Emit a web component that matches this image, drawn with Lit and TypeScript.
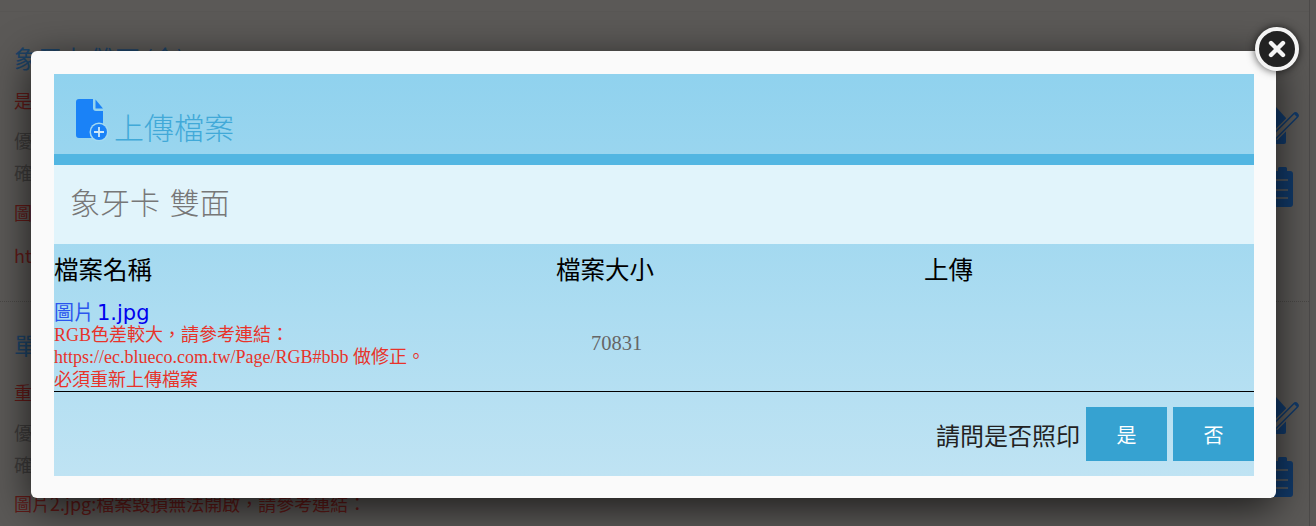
import { LitElement, html, css, svg } from "lit";
import { customElement } from "lit/decorators.js";

const editIcon = svg`<svg class="ico" width="38" height="38" viewBox="0 0 38 38">
  <path fill="#113a6a" d="M0 0H15L25 11V35a2 2 0 0 1-2 2H0Z"/>
  <path fill="none" stroke="#5b5957" stroke-width="9" d="M34.5 8.5 13 30"/>
  <path fill="none" stroke="#113a6a" stroke-width="6.5" stroke-linecap="round" d="M34.5 8.5 13 30"/>
  <path fill="none" stroke="#5b5957" stroke-width="3.4" d="M34.5 8.5 13 30"/>
</svg>`;
const clipIcon = svg`<svg class="ico" width="32" height="40" viewBox="0 0 32 40">
  <path fill="#113a6a" d="M0 4H17V1.5a1.5 1.5 0 0 1 1.5-1.5h6a1.5 1.5 0 0 1 1.5 1.5V4h3a3 3 0 0 1 3 3v30a3 3 0 0 1-3 3H0Z"/>
  <path stroke="#5b5957" stroke-width="1.5" d="M0 13H27M0 23H27M0 31H27"/>
</svg>`;

@customElement("app-root")
export class AppRoot extends LitElement {
  static styles = css`
    :host { display: block; width: 1316px; height: 526px; position: relative; overflow: hidden; background: #5b5957;
      font-family: "Noto Sans CJK TC", "Liberation Sans", sans-serif; }
    .page { width: 1310px; height: 526px; box-sizing: border-box; padding-top: 11px;
      display: flex; flex-direction: column; border-right: 1px solid #4c4a49; overflow: hidden; }
    .item { position: relative; flex: none; padding: 27px 0 0 14px; border-top: 1px dotted #4a4846; }
    .item.first { height: 290px; box-sizing: border-box; padding-top: 30px; border-top: 1px solid #585654; }
    .item h3 { margin: 0 0 15px; font-size: 24px; line-height: 32px; font-weight: 400; color: #1d4468; }
    .item.first h3 { margin-bottom: 10px; }
    .item p { margin: 0 0 8px; font-size: 18px; line-height: 32px; color: #3e3c3b; }
    .item p.tight { margin-bottom: 0; }
    .item p.red { color: #621a17; }
    .item p.last { margin-bottom: 11px; }
    .item p.close-gap { margin-bottom: 7px; }
    .tools { position: absolute; right: 10px; top: 95px; display: flex; flex-direction: column; align-items: flex-start; gap: 22px; }
    .ico { display: block; }
    .modal { position: absolute; left: 31px; top: 51px; width: 1245px; height: 447px; box-sizing: border-box;
      padding: 23px 22px 22px 23px; background: #fafafa; border-radius: 6px;
      box-shadow: 0 10px 40px rgba(0,0,0,.7); }
    .inner { height: 402px; background: linear-gradient(to bottom, #90d2ee, #bfe3f3); display: flex; flex-direction: column; }
    .head { height: 80px; box-sizing: border-box; display: flex; align-items: flex-end; padding: 0 0 4px 22px; gap: 5px; flex: none; }
    .head svg { margin-bottom: 9px; display: block; }
    .head h2 { margin: 0; font-size: 30px; line-height: 48px; font-weight: 300; color: #41a9d8; }
    .bar { height: 11px; background: #52b6e2; flex: none; }
    .sub { height: 79px; box-sizing: border-box; background: #e1f4fb; padding: 0 0 8px 16px; flex: none; display: flex; align-items: center;
      font-size: 30px; font-weight: 300; color: #777; word-spacing: 3px; }
    .thead, .row { display: grid; grid-template-columns: 502px 368px 1fr; }
    .thead { height: 52px; box-sizing: border-box; padding-bottom: 4px; align-items: center; font-size: 24.5px; color: #000; }
    .row { height: 96px; box-sizing: border-box; border-bottom: 1px solid #000; align-items: end; font-family: "Liberation Serif", "Noto Sans CJK TC", serif; }
    .file a { display: block; color: #2a55ee; font-size: 20px; line-height: 24px; margin-bottom: -1px; font-family: "DejaVu Sans", "Noto Sans CJK TC", sans-serif; text-decoration: none; }
    .file a b { font-weight: 400; font-size: 21px; color: #0000ee; margin-left: 3px; }
    .file div { color: #e8332a; font-size: 18px; line-height: 22.5px; }
    .size { padding: 0 0 0 35px; font-size: 20.5px; color: #666; align-self: center; }
    .foot { display: flex; justify-content: flex-end; align-items: center; padding-top: 15px; gap: 6px; }
    .foot span { font-size: 24px; color: #222; }
    .btn { width: 81px; height: 54px; display: flex; align-items: center; justify-content: center; background: #36a2d1; color: #fff; font-size: 20px; font-family: "Liberation Serif", "Noto Sans CJK TC", serif; border: none; padding: 0; }
    .close { position: absolute; left: 1255px; top: 27px; width: 44px; height: 44px; border: 4px solid #f4f4f4; border-radius: 50%; background: #222;
      box-sizing: border-box; box-shadow: 0 0 8px rgba(0,0,0,.7); display: flex; align-items: center; justify-content: center; }
  `;

  render() {
    return html`
      <div class="page">
        <div class="item first">
          <h3>象牙卡 雙面 (金)</h3>
          <p class="red">是否照印</p>
          <p class="tight">優先處理</p>
          <p>確認檔案</p>
          <p class="red last">圖片1.jpg</p>
          <p class="red">https://ec.blueco.com.tw</p>
          <div class="tools">${editIcon}${clipIcon}</div>
        </div>
        <div class="item">
          <h3>單面</h3>
          <p class="red">重新上傳</p>
          <p class="tight">優先處理</p>
          <p class="close-gap">確認檔案</p>
          <p class="red">圖片2.jpg:檔案毀損無法開啟，請參考連結：</p>
          <div class="tools">${editIcon}${clipIcon}</div>
        </div>
      </div>
      <div class="modal">
        <div class="inner">
          <div class="head">
            <svg width="33" height="42" viewBox="0 0 33 42">
              <path fill="#1a82f7" d="M3 0H17V9a3 3 0 0 0 3 3h7V39H3a3 3 0 0 1-3-3V3a3 3 0 0 1 3-3z"/>
              <path fill="#1a82f7" d="M19.5 0.5 27 9.5H19.5z"/>
              <circle cx="23" cy="33" r="9.5" fill="#a5daf1"/>
              <circle cx="23" cy="33" r="8" fill="#1a82f7"/>
              <path stroke="#cfe9f8" stroke-width="1.8" d="M23 28v10M18 33h10"/>
            </svg>
            <h2>上傳檔案</h2>
          </div>
          <div class="bar"></div>
          <div class="sub">象牙卡 雙面</div>
          <div class="thead"><span>檔案名稱</span><span>檔案大小</span><span>上傳</span></div>
          <div class="row">
            <div class="file">
              <a>圖片<b>1.jpg</b></a>
              <div>RGB色差較大，請參考連結：<br />https://ec.blueco.com.tw/Page/RGB#bbb 做修正。<br />必須重新上傳檔案</div>
            </div>
            <div class="size">70831</div>
            <div></div>
          </div>
          <div class="foot">
            <span>請問是否照印</span>
            <button class="btn">是</button>
            <button class="btn">否</button>
          </div>
        </div>
      </div>
      <div class="close">
        <svg width="18" height="18" viewBox="0 0 18 18"><path stroke="#f4f4f4" stroke-width="4.4" stroke-linecap="round" d="M3 3l12 12M15 3L3 15"/></svg>
      </div>
    `;
  }
}
